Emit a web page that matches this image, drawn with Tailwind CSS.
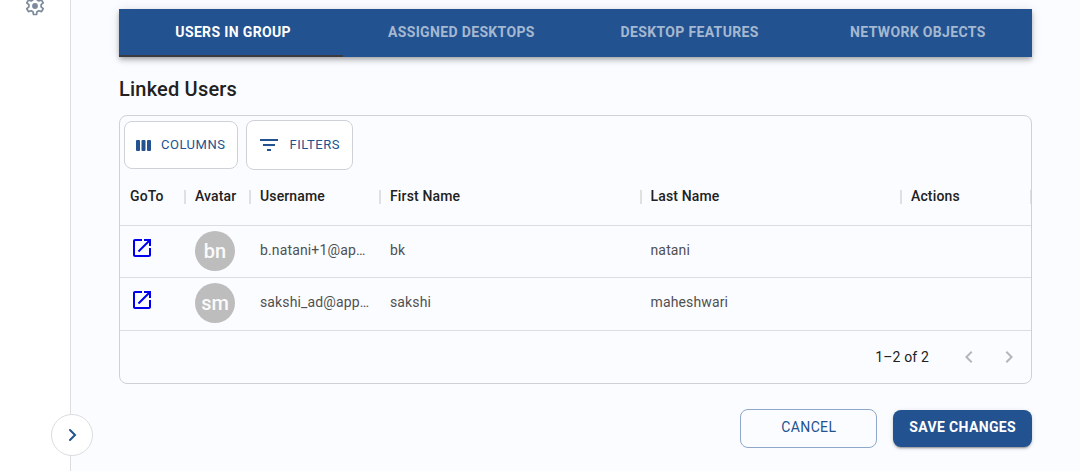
<!DOCTYPE html>
<html lang="en">

<head>
    <meta charset="UTF-8">
    <meta name="viewport" content="width=device-width, initial-scale=1.0">
    <title>Group - Linked Users</title>
    <script src="https://cdn.jsdelivr.net/npm/@tailwindcss/browser@4"></script>
</head>

<body class="flex min-h-screen bg-[#fbfcff] font-['Roboto',sans-serif] text-sm text-[#212121]">

    <!-- Sidebar -->
    <aside class="relative w-[71px] shrink-0 bg-white border-r border-[#dcdde0]">
        <a href="#" aria-label="Settings" class="flex justify-center -mt-1.5 text-[#7b8a9c]">
            <svg class="size-6" viewBox="0 0 24 24" fill="none" stroke="currentColor" stroke-width="1.700" stroke-linejoin="round">
                <path d="M10.500 20.500l-.5-2.700-1.900-1.100-2.600.9-1.700-2.900 2.100-1.800v-2.200L3.800 8.900l1.700-2.900 2.600.9L10 5.800l.5-2.700h3l.5 2.700 1.900 1.100 2.600-.9 1.700 2.900-2.100 1.800v2.200l2.100 1.800-1.700 2.900-2.600-.9-1.900 1.100-.5 2.700z" />
                <circle cx="12" cy="12" r="2.900" fill="currentColor" stroke="none" />
            </svg>
        </a>
        <button aria-label="Expand menu"
            class="absolute -right-[23px] bottom-[15px] flex size-[42px] items-center justify-center rounded-full border border-[#dcdde0] bg-white text-[#22528f]">
            <svg class="size-6" viewBox="0 0 24 24" fill="none" stroke="currentColor" stroke-width="2" stroke-linecap="round">
                <path d="M10 7l5 5-5 5" />
            </svg>
        </button>
    </aside>

    <main class="min-w-0 grow px-12 pt-[9px] pb-5">
        <!-- Tabs -->
        <div role="tablist"
            class="relative grid h-12 grid-cols-4 bg-[#22528f] font-bold tracking-wide text-white/60 shadow-[0_2px_4px_-1px_rgba(0,0,0,0.2),0_4px_5px_0_rgba(0,0,0,0.14),0_1px_10px_0_rgba(0,0,0,0.12)]">
            <button role="tab" aria-selected="true" class="pb-0.5 text-white">USERS IN GROUP</button>
            <button role="tab" class="pb-0.5">ASSIGNED DESKTOPS</button>
            <button role="tab" class="pb-0.5">DESKTOP FEATURES</button>
            <button role="tab" class="pb-0.5">NETWORK OBJECTS</button>
            <span class="absolute bottom-0 left-0 h-0.5 w-[224px] bg-[#3a3b40]"></span>
        </div>

        <h2 class="pt-4 pb-2.5 text-xl leading-8 font-medium tracking-[0.01em]">Linked Users</h2>

        <!-- Data grid -->
        <div class="overflow-hidden rounded-lg border border-[#cfd1d8]">
            <div class="flex items-center gap-2 px-1 pt-1 text-[13px] tracking-[0.04em] text-[#22528f]">
                <button class="flex h-12 items-center gap-2 rounded-lg border border-[#cfd1d8] bg-white pr-3 pl-2.5">
                    <svg class="size-[18px]" viewBox="0 0 18 18" fill="currentColor">
                        <rect x="1" y="4" width="4" height="11" rx="1" />
                        <rect x="6.500" y="4" width="4" height="11" rx="1" />
                        <rect x="12" y="4" width="4" height="11" rx="1" />
                    </svg>
                    COLUMNS
                </button>
                <button class="flex h-[50px] items-center gap-2 rounded-lg border border-[#cfd1d8] bg-white pr-3 pl-2.5">
                    <svg class="size-6" viewBox="0 0 24 24" fill="currentColor">
                        <path d="M10 18h4v-2h-4v2zM3 6v2h18V6H3zm3 7h12v-2H6v2z" />
                    </svg>
                    FILTERS
                </button>
            </div>

            <table class="w-full table-fixed text-left tracking-[0.01em]">
                <thead>
                    <tr class="h-[55px] border-b border-[#dcdde2]">
                        <th class="relative w-[65px] px-2.5 pb-0.5 font-medium">GoTo<span class="absolute top-5 -right-px h-3.5 w-0.5 bg-[#e0e0e0]"></span></th>
                        <th class="relative w-[65px] px-2.5 pb-0.5 font-medium">Avatar<span class="absolute top-5 -right-px h-3.5 w-0.5 bg-[#e0e0e0]"></span></th>
                        <th class="relative w-[130px] px-2.5 pb-0.5 font-medium">Username<span class="absolute top-5 -right-px h-3.5 w-0.5 bg-[#e0e0e0]"></span></th>
                        <th class="relative px-2.5 pb-0.5 font-medium">First Name<span class="absolute top-5 -right-px h-3.5 w-0.5 bg-[#e0e0e0]"></span></th>
                        <th class="relative px-2.5 pb-0.5 font-medium">Last Name<span class="absolute top-5 -right-px h-3.5 w-0.5 bg-[#e0e0e0]"></span></th>
                        <th class="relative w-[130px] px-2.5 pb-0.5 font-medium">Actions<span class="absolute top-5 -right-px h-3.5 w-0.5 bg-[#e0e0e0]"></span></th>
                    </tr>
                </thead>
                <tbody class="text-[#505050]">
                    <tr class="h-[52px] border-b border-[#dcdde2]">
                        <td class="px-2.5 pb-1.5">
                            <a href="#" aria-label="Go to bk natani" class="block text-[#0000ee]">
                                <svg class="size-6" viewBox="0 0 24 24" fill="currentColor">
                                    <path d="M19 19H5V5h7V3H5c-1.110 0-2 .9-2 2v14c0 1.100.890 2 2 2h14c1.100 0 2-.9 2-2v-7h-2v7zM14 3v2h3.590l-9.830 9.830 1.410 1.410L19 6.410V10h2V3h-7z" />
                                </svg>
                            </a>
                        </td>
                        <td class="px-2.5"><span class="flex size-10 items-center justify-center rounded-full bg-[#bdbdbd] text-xl font-medium tracking-normal text-[#fafafa]">bn</span></td>
                        <td class="pr-2 pb-0.5 pl-2.5 whitespace-nowrap">b.natani+1@ap…</td>
                        <td class="px-2.5 pb-0.5">bk</td>
                        <td class="px-2.5 pb-0.5">natani</td>
                        <td></td>
                    </tr>
                    <tr class="h-[53px] border-b border-[#dcdde2]">
                        <td class="px-2.5 pb-2">
                            <a href="#" aria-label="Go to sakshi maheshwari" class="block text-[#0000ee]">
                                <svg class="size-6" viewBox="0 0 24 24" fill="currentColor">
                                    <path d="M19 19H5V5h7V3H5c-1.110 0-2 .9-2 2v14c0 1.100.890 2 2 2h14c1.100 0 2-.9 2-2v-7h-2v7zM14 3v2h3.590l-9.830 9.830 1.410 1.410L19 6.410V10h2V3h-7z" />
                                </svg>
                            </a>
                        </td>
                        <td class="px-2.5 pb-0.5"><span class="flex size-10 items-center justify-center rounded-full bg-[#bdbdbd] text-xl font-medium tracking-normal text-[#fafafa]">sm</span></td>
                        <td class="pr-2 pb-1 pl-2.5 whitespace-nowrap">sakshi_ad@app…</td>
                        <td class="px-2.5 pb-1">sakshi</td>
                        <td class="px-2.5 pb-1">maheshwari</td>
                        <td></td>
                    </tr>
                </tbody>
            </table>

            <div class="flex h-[52px] items-center justify-end pr-0.5">
                <span class="mr-5 tracking-[0.01em]">1–2 of 2</span>
                <button disabled aria-label="Previous page" class="flex size-10 items-center justify-center text-[#b5b6b8]">
                    <svg class="size-6" viewBox="0 0 24 24" fill="currentColor">
                        <path d="M15.410 16.590L10.830 12l4.580-4.590L14 6l-6 6 6 6z" />
                    </svg>
                </button>
                <button disabled aria-label="Next page" class="flex size-10 items-center justify-center text-[#b5b6b8]">
                    <svg class="size-6" viewBox="0 0 24 24" fill="currentColor">
                        <path d="M8.590 16.590L13.170 12 8.590 7.410 10 6l6 6-6 6z" />
                    </svg>
                </button>
            </div>
        </div>

        <div class="mt-[25px] flex items-center justify-end gap-4 tracking-wide">
            <button class="h-[39px] w-[137px] rounded-lg border border-[#8fa8c9] pb-0.5 text-[#22528f]">CANCEL</button>
            <button class="h-[37px] rounded-lg bg-[#22528f] px-4 pb-0.5 font-bold text-white shadow-[0_3px_1px_-2px_rgba(0,0,0,0.2),0_2px_2px_0_rgba(0,0,0,0.14),0_1px_5px_0_rgba(0,0,0,0.12)]">SAVE CHANGES</button>
        </div>
    </main>

</body>

</html>
